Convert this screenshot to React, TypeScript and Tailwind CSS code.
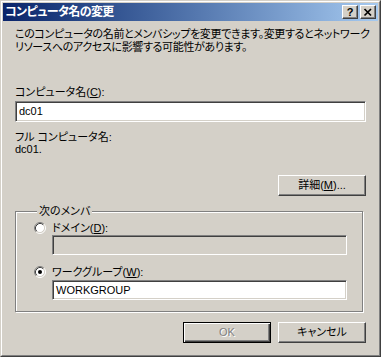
import type { ReactNode } from "react";

const font = "font-['Liberation_Sans','Noto_Sans_CJK_JP',sans-serif] [font-feature-settings:'palt']";

function Radio({ checked }: { checked?: boolean }) {
  return (
    <svg width="12" height="12" viewBox="0 0 12 12" className="shrink-0">
      <circle cx="6" cy="6" r="4.5" fill="#fff" />
      <path d="M2.11 9.89 A5.5 5.5 0 0 1 9.89 2.11" fill="none" stroke="#808080" />
      <path d="M9.89 2.11 A5.5 5.5 0 0 1 2.11 9.89" fill="none" stroke="#fff" />
      <path d="M2.82 9.18 A4.5 4.5 0 0 1 9.18 2.82" fill="none" stroke="#404040" />
      <path d="M9.18 2.82 A4.5 4.5 0 0 1 2.82 9.18" fill="none" stroke="#d4d0c8" />
      {checked && <circle cx="6" cy="6" r="2" fill="#000" />}
    </svg>
  );
}

function Field({ value, disabled, className }: { value?: string; disabled?: boolean; className: string }) {
  return (
    <div
      className={`${className} flex items-center px-[3px] border border-t-[#808080] border-l-[#808080] border-b-white border-r-white shadow-[inset_1px_1px_0_#404040,inset_-1px_-1px_0_#d4d0c8] ${
        disabled ? "bg-[#d4d0c8]" : "bg-white"
      }`}
    >
      {value}
    </div>
  );
}

function Button({ children, primary, disabled }: { children: ReactNode; primary?: boolean; disabled?: boolean }) {
  return (
    <button
      className={`w-[88px] h-[21px] flex items-center justify-center border ${
        primary
          ? "border-black shadow-[inset_1px_1px_0_#fff,inset_-1px_-1px_0_#404040,inset_-2px_-2px_0_#808080]"
          : "border-t-white border-l-white border-r-[#404040] border-b-[#404040] shadow-[inset_-1px_-1px_0_#808080]"
      } ${disabled ? "text-[#808080] [text-shadow:1px_1px_0_#fff]" : "text-black"}`}
    >
      {children}
    </button>
  );
}

export default function App() {
  return (
    <div className={`w-[381px] h-[357px] bg-[#d4d0c8] text-[11px] leading-[13px] text-black ${font}`}>
      <div className="h-full border border-t-[#d4d0c8] border-l-[#d4d0c8] border-r-[#404040] border-b-[#404040]">
        <div className="h-full border border-t-white border-l-white border-r-[#808080] border-b-[#808080] p-px flex flex-col">
          {/* title bar */}
          <div className="h-[18px] flex items-center pl-[2px] pr-[2px] bg-gradient-to-r from-[#0a246a] to-[#a6caf0]">
            <span className="text-white font-bold text-[12px] tracking-[-0.6px] leading-[18px]">コンピュータ名の変更</span>
            <div className="ml-auto flex gap-[2px]">
              <div className="w-[16px] h-[14px] flex items-center justify-center bg-[#d4d0c8] border border-t-white border-l-white border-r-[#404040] border-b-[#404040] shadow-[inset_-1px_-1px_0_#808080] font-['Liberation_Sans'] font-bold text-[11px] leading-none">
                ?
              </div>
              <div className="w-[16px] h-[14px] flex items-center justify-center bg-[#d4d0c8] border border-t-white border-l-white border-r-[#404040] border-b-[#404040] shadow-[inset_-1px_-1px_0_#808080]">
                <svg width="10" height="9" viewBox="0 0 10 9">
                  <path d="M1.5 1 L8 7.5 M8 1 L1.5 7.5" stroke="#000" strokeWidth="1.7" />
                </svg>
              </div>
            </div>
          </div>

          <div className="px-[12px] flex flex-col">
            <div className="mt-[7px] whitespace-nowrap tracking-[-0.35px]">
              <div>このコンピュータの名前とメンバシップを変更できます。変更するとネットワーク</div>
              <div>リソースへのアクセスに影響する可能性があります。</div>
            </div>

            <div className="mt-[32px]">
              コンピュータ名(<span className="underline">C</span>):
            </div>
            <Field className="mt-[2px] w-[351px] h-[21px]" value="dc01" />

            <div className="mt-[9px] leading-[12px]">
              <div>フル コンピュータ名:</div>
              <div>dc01.</div>
            </div>

            <div className="mt-[20px] self-end">
              <Button>
                詳細(<span className="underline">M</span>)...
              </Button>
            </div>

            <fieldset className="mt-[9px] w-[348px] border border-[#808080] shadow-[inset_1px_1px_0_#fff,1px_1px_0_#fff] pl-[18px] pr-[15px] pb-[11px]">
              <legend className="ml-[3px] px-[2px] bg-[#d4d0c8]">次のメンバ</legend>
              <div className="flex items-center gap-[6px] h-[14px] mt-[3px]">
                <Radio />
                <span>
                  ドメイン(<span className="underline">D</span>):
                </span>
              </div>
              <Field className="ml-[18px] w-[295px] h-[20px]" disabled />
              <div className="flex items-center gap-[6px] h-[14px] mt-[10px]">
                <Radio checked />
                <span>
                  ワークグループ(<span className="underline">W</span>):
                </span>
              </div>
              <Field className="mt-[1px] ml-[18px] w-[295px] h-[20px]" value="WORKGROUP" />
            </fieldset>

            <div className="mt-[10px] flex justify-end gap-[7px]">
              <Button primary disabled>
                OK
              </Button>
              <Button>キャンセル</Button>
            </div>
          </div>
        </div>
      </div>
    </div>
  );
}
